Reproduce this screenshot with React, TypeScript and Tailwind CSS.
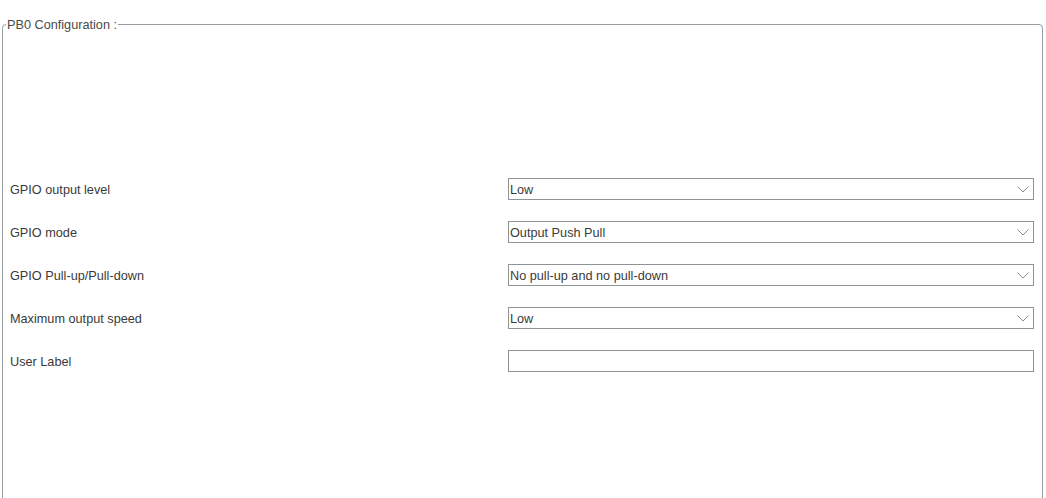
const rows = [
  { label: 'GPIO output level', value: 'Low', select: true },
  { label: 'GPIO mode', value: 'Output Push Pull', select: true },
  { label: 'GPIO Pull-up/Pull-down', value: 'No pull-up and no pull-down', select: true },
  { label: 'Maximum output speed', value: 'Low', select: true },
  { label: 'User Label', value: '', select: false },
];

function Chevron() {
  return (
    <svg width="12" height="7" viewBox="0 0 12 7" className="mr-[4px]">
      <path d="M0.5 0.5 L6 6 L11.5 0.5" fill="none" stroke="#8c8c8c" strokeWidth="1" />
    </svg>
  );
}

export default function App() {
  return (
    <div className="w-[1046px] h-[498px] overflow-hidden bg-white font-['Liberation_Sans',Arial,sans-serif] text-[12.7px] text-[#3a3a3a]">
      <fieldset className="ml-[2px] mt-[17px] w-[1041px] h-[500px] border border-[#989da2] rounded-[4px]">
        <legend className="ml-[3px] px-[1px] pt-[1px] leading-[14px] text-[12.7px] text-[#4a4a4a]">PB0 Configuration :</legend>
        <div className="pt-[146px] flex flex-col gap-[21px]">
          {rows.map((r) => (
            <div key={r.label} className="flex items-center">
              <div className="w-[505px] pl-[7px] pt-[1px] leading-[14px]">{r.label}</div>
              <div className="w-[526px] h-[22px] border border-[#8e9398] flex items-center justify-between pl-[1px]">
                <span className="leading-[14px] pt-[1px]">{r.value}</span>
                {r.select && <Chevron />}
              </div>
            </div>
          ))}
        </div>
      </fieldset>
    </div>
  );
}
